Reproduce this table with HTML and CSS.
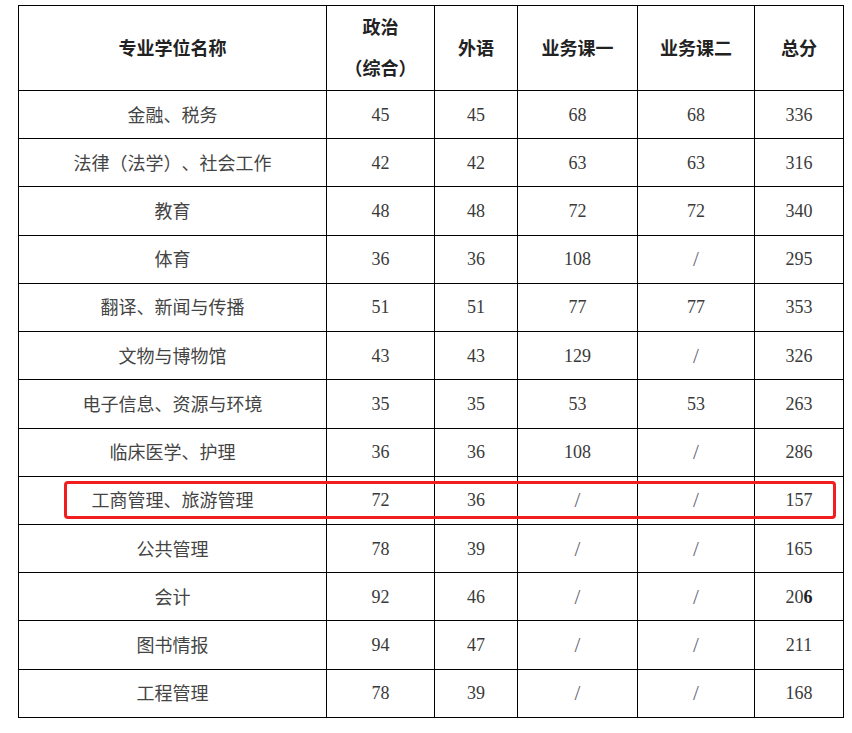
FILE: index.html
```html
<!DOCTYPE html>
<html lang="zh-CN">
<head>
<meta charset="utf-8">
<title>专业学位分数线</title>
<link rel="stylesheet" href="styles.css">
</head>
<body>
<div class="page">
  <table class="scores">
    <colgroup>
      <col class="c-name"><col class="c-pol"><col class="c-lang"><col class="c-b1"><col class="c-b2"><col class="c-tot">
    </colgroup>
    <thead>
      <tr class="head">
        <th>专业学位名称</th>
        <th><div class="two"><span>政治</span><span>（综合）</span></div></th>
        <th>外语</th>
        <th>业务课一</th>
        <th>业务课二</th>
        <th>总分</th>
      </tr>
    </thead>
    <tbody>
      <tr><td>金融、税务</td><td>45</td><td>45</td><td>68</td><td>68</td><td>336</td></tr>
      <tr><td>法律（法学）、社会工作</td><td>42</td><td>42</td><td>63</td><td>63</td><td>316</td></tr>
      <tr><td>教育</td><td>48</td><td>48</td><td>72</td><td>72</td><td>340</td></tr>
      <tr><td>体育</td><td>36</td><td>36</td><td>108</td><td class="na">/</td><td>295</td></tr>
      <tr><td>翻译、新闻与传播</td><td>51</td><td>51</td><td>77</td><td>77</td><td>353</td></tr>
      <tr><td>文物与博物馆</td><td>43</td><td>43</td><td>129</td><td class="na">/</td><td>326</td></tr>
      <tr><td>电子信息、资源与环境</td><td>35</td><td>35</td><td>53</td><td>53</td><td>263</td></tr>
      <tr><td>临床医学、护理</td><td>36</td><td>36</td><td>108</td><td class="na">/</td><td>286</td></tr>
      <tr><td>工商管理、旅游管理</td><td>72</td><td>36</td><td class="na">/</td><td class="na">/</td><td>157</td></tr>
      <tr><td>公共管理</td><td>78</td><td>39</td><td class="na">/</td><td class="na">/</td><td>165</td></tr>
      <tr><td>会计</td><td>92</td><td>46</td><td class="na">/</td><td class="na">/</td><td>20<b class="strong">6</b></td></tr>
      <tr><td>图书情报</td><td>94</td><td>47</td><td class="na">/</td><td class="na">/</td><td>211</td></tr>
      <tr><td>工程管理</td><td>78</td><td>39</td><td class="na">/</td><td class="na">/</td><td>168</td></tr>
    </tbody>
  </table>
  <div class="highlight"></div>
</div>
</body>
</html>
```

FILE: styles.css
```css
html, body {
  margin: 0;
  padding: 0;
  background: #ffffff;
}

.page {
  position: relative;
  padding: 5px 0 0 18px;
}

.scores {
  border-collapse: collapse;
  table-layout: fixed;
  width: 825px;
  font-family: "Liberation Serif", "Noto Sans CJK SC", serif;
  font-size: 18px;
  color: #3a3a3a;
  text-spacing-trim: space-all;
}

.c-name { width: 308px; }
.c-pol { width: 108px; }
.c-lang { width: 83px; }
.c-b1 { width: 120px; }
.c-b2 { width: 117px; }
.c-tot { width: 89px; }

.scores th,
.scores td {
  border: 1px solid #000;
  padding: 0;
  text-align: center;
  vertical-align: middle;
  line-height: 20px;
}

.scores th {
  font-family: "Noto Sans CJK SC", sans-serif;
  font-weight: 700;
  color: #222;
  padding-bottom: 3px;
}

.scores td:first-child {
  font-family: "Noto Sans CJK SC", sans-serif;
  color: #444;
  padding-bottom: 2px;
}

.head {
  height: 85px;
}

.scores tbody tr {
  height: 48.23px;
}

.two {
  display: flex;
  flex-direction: column;
  align-items: center;
  gap: 21px;
}

.na {
  color: #5f6474;
  font-size: 21px;
}

.strong {
  font-weight: 700;
  color: #222;
}

.highlight {
  position: absolute;
  left: 64px;
  top: 481px;
  width: 766px;
  height: 32px;
  border: 3px solid #f01e1e;
  border-radius: 4px;
  pointer-events: none;
}
```
